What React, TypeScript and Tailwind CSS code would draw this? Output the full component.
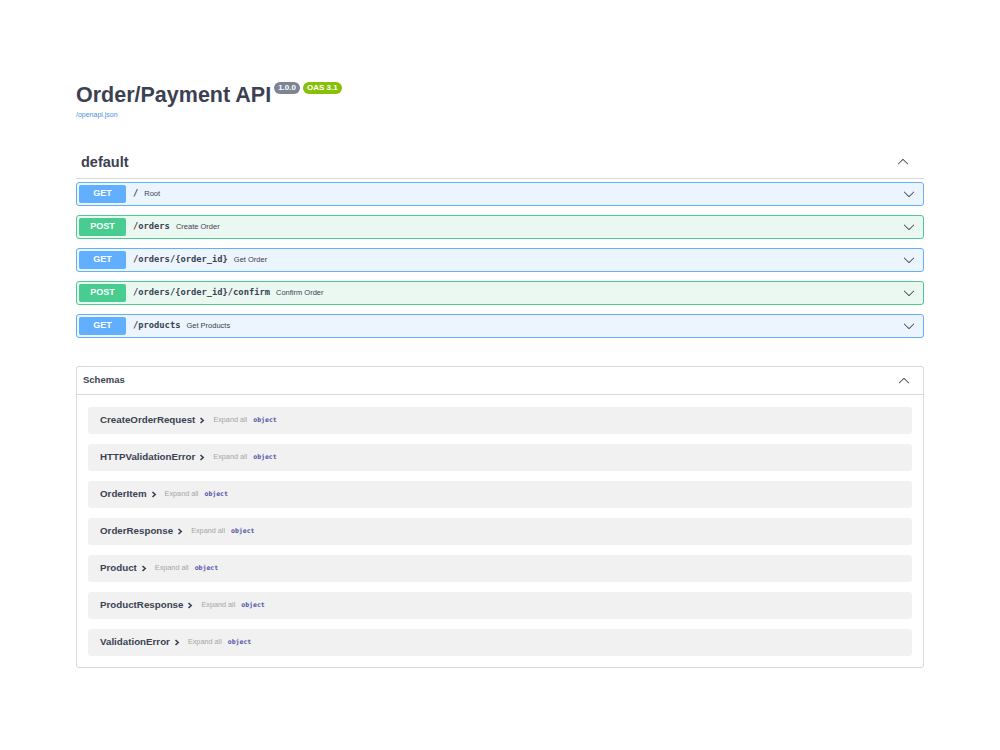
const ops = [
  { method: "GET", path: "/", summary: "Root" },
  { method: "POST", path: "/orders", summary: "Create Order" },
  { method: "GET", path: "/orders/{order_id}", summary: "Get Order" },
  { method: "POST", path: "/orders/{order_id}/confirm", summary: "Confirm Order" },
  { method: "GET", path: "/products", summary: "Get Products" },
];

const schemas = [
  "CreateOrderRequest",
  "HTTPValidationError",
  "OrderItem",
  "OrderResponse",
  "Product",
  "ProductResponse",
  "ValidationError",
];

function Arrow({ up = false, size = 12 }: { up?: boolean; size?: number }) {
  return (
    <svg
      width={size}
      height={size}
      viewBox="0 0 20 20"
      className={up ? "rotate-180 fill-[#3b4151]" : "fill-[#3b4151]"}
    >
      <path d="M17.418 6.109c.272-.268.709-.268.979 0s.271.701 0 .969l-7.908 7.83c-.27.268-.707.268-.979 0l-7.908-7.83c-.27-.268-.27-.701 0-.969.271-.268.709-.268.979 0L10 13.25l7.418-7.141z" />
    </svg>
  );
}

function OpBlock({ method, path, summary }: { method: string; path: string; summary: string }) {
  const isGet = method === "GET";
  return (
    <div
      className={`flex h-[24px] items-center rounded-[3px] border pl-[2px] pr-[8px] ${
        isGet ? "border-[#61affe] bg-[#ecf5fe]" : "border-[#49cc90] bg-[#ebf8f2]"
      }`}
    >
      <span
        className={`flex h-[18px] w-[47px] items-center justify-center rounded-[2px] text-[9px] font-bold text-white ${
          isGet ? "bg-[#61affe]" : "bg-[#49cc90]"
        }`}
      >
        {method}
      </span>
      <span className="ml-[7px] font-['DejaVu_Sans_Mono',monospace] text-[8.75px] font-bold text-[#3b4151]">
        {path}
      </span>
      <span className="ml-[6px] text-[7.5px] text-[#3b4151]">{summary}</span>
      <span className="ml-auto">
        <Arrow />
      </span>
    </div>
  );
}

function SchemaRow({ name }: { name: string }) {
  return (
    <div className="flex h-[27px] items-center rounded-[3px] bg-[#f1f1f1] pl-[12px]">
      <span className="text-[9.75px] font-bold text-[#3b4151]">{name}</span>
      <svg width="6" height="7" viewBox="0 0 6 7" className="ml-[4px]">
        <path d="M1.5 1 L4.2 3.5 L1.5 6" fill="none" stroke="#3b4151" strokeWidth="1.6" />
      </svg>
      <span className="ml-[8px] text-[7.25px] text-[#a5a5a5]">Expand all</span>
      <span className="ml-[6px] font-['DejaVu_Sans_Mono',monospace] text-[6.5px] font-bold text-[#55a]">
        object
      </span>
    </div>
  );
}

export default function App() {
  return (
    <div className="min-h-screen bg-white font-['Liberation_Sans',Arial,sans-serif] text-[#3b4151]">
      <div className="mx-auto w-[848px] pt-[82px]">
        <div className="flex items-start">
          <h2 className="text-[21.5px] font-bold leading-[27px] text-[#3b4151]">Order/Payment API</h2>
          <div className="ml-[3px] mt-[0px] flex gap-[3px]">
            <span className="flex h-[12px] items-center rounded-full bg-[#7d8492] px-[4px] text-[8px] font-bold text-white">
              1.0.0
            </span>
            <span className="flex h-[12px] items-center rounded-full bg-[#89bf04] px-[4px] text-[8px] font-bold text-white">
              OAS 3.1
            </span>
          </div>
        </div>
        <p className="mt-[1px] text-[7px] leading-[10px] text-[#4990e2]">/openapi.json</p>

        <div className="mt-[26px] flex h-[33px] items-center border-b border-[#d8d9dc] pl-[5px] pr-[15px]">
          <h3 className="mt-[2px] text-[14.5px] font-bold">default</h3>
          <span className="ml-auto">
            <Arrow up />
          </span>
        </div>

        <div className="mt-[3px] flex flex-col gap-[9px]">
          {ops.map((op) => (
            <OpBlock key={op.method + op.path} {...op} />
          ))}
        </div>

        <div className="mt-[28px] rounded-[3px] border border-[#d8d9dc]">
          <div className="flex h-[28px] items-center border-b border-[#d8d9dc] pl-[6px] pr-[13px]">
            <span className="text-[9.5px] font-bold">Schemas</span>
            <span className="ml-auto">
              <Arrow up />
            </span>
          </div>
          <div className="flex flex-col gap-[10px] px-[11px] pb-[11px] pt-[12px]">
            {schemas.map((s) => (
              <SchemaRow key={s} name={s} />
            ))}
          </div>
        </div>
      </div>
    </div>
  );
}
